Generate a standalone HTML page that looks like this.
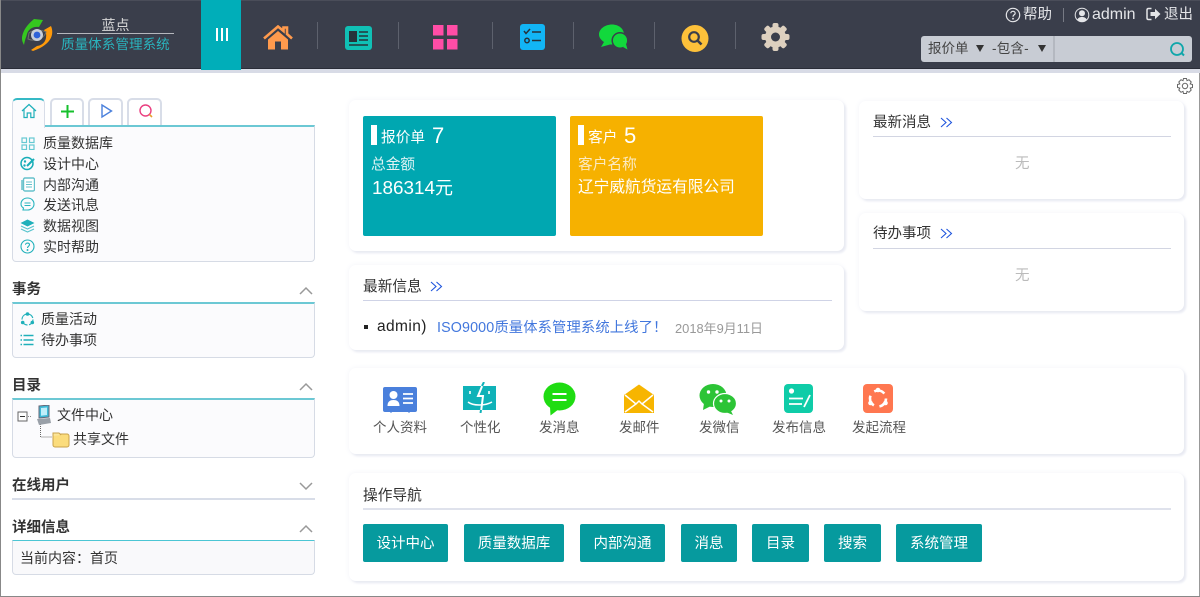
<!DOCTYPE html>
<html lang="zh-CN">
<head>
<meta charset="utf-8">
<title>质量体系管理系统</title>
<style>
*{box-sizing:border-box}
html,body{margin:0;padding:0;background:#fff}
body{width:1200px;height:597px;position:relative;overflow:hidden;font-family:"Liberation Sans","Noto Sans CJK SC",sans-serif;font-size:14px;color:#333}
.t{position:absolute;white-space:nowrap;line-height:20px;height:20px}
.a{position:absolute;display:block}
.sep{position:absolute;top:22px;width:1px;height:27px;background:#5d616d}
.card{position:absolute;background:#fff;border-radius:7px;box-shadow:2px 2px 2px #e8eaf2,0 0 6px #f2f3f8}
.line{position:absolute;height:2px;background:#dfe2ec}
.box{position:absolute;left:12px;width:303px;background:#fbfbfd;border:1px solid #d6dbe5;border-top:2px solid #6cc8d4;border-radius:0 0 4px 4px}
.h{font-weight:bold;color:#333;font-size:14.5px}
.btn{position:absolute;top:524px;height:38px;line-height:40px;background:#069a9e;color:#fff;border-radius:2px;text-align:center;font-size:14.5px}
.tab{position:absolute;top:98px;height:27px;background:#fff;border:2px solid #d8dde8;border-bottom:0;border-radius:5px 5px 0 0}
.ic{font-size:13.5px;color:#555}
</style>
</head>
<body>
<!-- header -->
<div class="a" style="left:0;top:0;width:1200px;height:69px;background:#3a3e4b;border-top:1px solid #4a4d59;border-bottom:1px solid #2a2d38"></div>
<div class="a" style="left:0;top:69px;width:1200px;height:4px;background:#d8dbe6"></div>
<div class="a" style="left:0;top:0;width:1px;height:597px;background:#888"></div>
<div class="a" style="left:1199px;top:73px;width:1px;height:524px;background:#999"></div>
<div class="a" style="left:0;top:596px;width:1200px;height:1px;background:#888"></div>

<!-- logo -->
<svg class="a" style="left:20px;top:18px" width="35" height="35" viewBox="0 0 35 35">
<path d="M2 21C2 13 8 6 14 1L23 2L19 9C12 8 8 12 7 16C6 20 5 21 4 27C3 25 2 23 2 21Z" fill="#35c81f"/>
<path d="M31 8C34 15 33 26 13 33L11 32L17 28C24 27 27 22 26 15L24 12Z" fill="#ff9a0a"/>
<path d="M9 15C13 11 22 12 26 14C24 21 15 24 8 21Z" fill="#3a3e4b" stroke="#6d6f6c" stroke-width="1"/>
<circle cx="17" cy="17" r="6" fill="#c8ced8"/><circle cx="17" cy="17" r="3.4" fill="#2f62d8"/>
</svg>
<div class="t" style="left:57px;width:117px;top:15px;text-align:center;color:#d8d8d8;font-size:14px">蓝点</div>
<div class="a" style="left:57px;top:33px;width:117px;height:1px;background:#b5b7bd"></div>
<div class="t" style="left:61px;top:35px;color:#2ab3bd;font-size:13.6px">质量体系管理系统</div>

<div class="a" style="left:201px;top:0;width:40px;height:70px;background:#00aeb9"></div>
<div class="a" style="left:216px;top:28px;width:2px;height:13px;background:#fff"></div>
<div class="a" style="left:221px;top:28px;width:2px;height:13px;background:#fff"></div>
<div class="a" style="left:226px;top:28px;width:2px;height:13px;background:#fff"></div>

<!-- home -->
<svg class="a" style="left:263px;top:25px" width="30" height="25" viewBox="0 0 30 25"><path d="M1 13.5L15 1.5L20.5 6V2.5H24V9L29 13.5" fill="none" stroke="#ff9a4d" stroke-width="2.6"/><path d="M5 14.500L15 6L25 14.500V24.500H18V16.500H12V24.500H5Z" fill="#ff9a4d"/></svg>
<div class="sep" style="left:317px"></div>
<!-- news -->
<svg class="a" style="left:345px;top:26px" width="27" height="24" viewBox="0 0 27 24"><rect width="27" height="24" rx="3" fill="#10c0b5"/><rect x="4" y="5" width="8" height="11" fill="#26323a"/><path d="M14 6H23M14 10H23M14 14H23M4 19H23" stroke="#26323a" stroke-width="1.500"/></svg>
<div class="sep" style="left:398px"></div>
<!-- grid -->
<svg class="a" style="left:433px;top:25px" width="25" height="25" viewBox="0 0 25 25" fill="#ff4da6"><rect width="10.500" height="10.500"/><rect x="14" width="10.500" height="10.500"/><rect y="14" width="10.500" height="10.500"/><rect x="14" y="14" width="10.500" height="10.500"/></svg>
<div class="sep" style="left:492px"></div>
<!-- list -->
<svg class="a" style="left:520px;top:24px" width="25" height="26" viewBox="0 0 25 26"><rect width="25" height="26" rx="3" fill="#12b5f5"/><path d="M4 7L6 9.500L10 5M12 8H21M12 16.500H21" fill="none" stroke="#26323a" stroke-width="1.500"/><circle cx="7" cy="16.500" r="2.200" fill="none" stroke="#26323a" stroke-width="1.500"/></svg>
<div class="sep" style="left:573px"></div>
<!-- chat -->
<svg class="a" style="left:599px;top:24px" width="30" height="27" viewBox="0 0 30 27"><path d="M13 0.500C20 0.500 25 5 25 10.500C25 16 20 20.500 13 20.500H11L2 23L5 18C2 16 0 13.500 0 10.500C0 5 6 0.500 13 0.500Z" fill="#12d83c"/><circle cx="21" cy="16.500" r="7.800" fill="#12d83c" stroke="#3a3e4b" stroke-width="1.500"/><path d="M24 23L28.500 25.500L27 20Z" fill="#12d83c"/></svg>
<div class="sep" style="left:654px"></div>
<!-- search -->
<svg class="a" style="left:681px;top:25px" width="28" height="27" viewBox="0 0 28 27"><circle cx="14" cy="13.500" r="13.500" fill="#fdc13a"/><circle cx="13" cy="12" r="4.800" fill="none" stroke="#3a3e4b" stroke-width="2.200"/><path d="M16.500 15.500L20.500 19.500" stroke="#3a3e4b" stroke-width="2.600"/></svg>
<div class="sep" style="left:735px"></div>
<!-- gear -->
<svg class="a" style="left:761px;top:23px" width="29" height="28" viewBox="0 0 29 28"><g fill="#ddd0bf"><circle cx="14.500" cy="14" r="10.500"/><g><rect x="11.500" y="0" width="6" height="28" rx="2"/><rect x="11.500" y="0" width="6" height="28" rx="2" transform="rotate(45 14.500 14)"/><rect x="11.500" y="0" width="6" height="28" rx="2" transform="rotate(90 14.500 14)"/><rect x="11.500" y="0" width="6" height="28" rx="2" transform="rotate(135 14.500 14)"/></g></g><circle cx="14.500" cy="14" r="4.500" fill="#3a3e4b"/></svg>

<!-- top right -->
<svg class="a" style="left:1005px;top:7px" width="16" height="16" viewBox="0 0 16 16"><circle cx="8" cy="8" r="6.700" fill="none" stroke="#e4e5e8" stroke-width="1.200"/><path d="M5.800 6.300C5.800 3.700 10.200 3.700 10.200 6.200C10.200 7.800 8 7.800 8 9.700" fill="none" stroke="#e4e5e8" stroke-width="1.200"/><circle cx="8" cy="11.700" r="0.900" fill="#e4e5e8"/></svg>
<div class="t" style="left:1023px;top:5px;color:#e4e5e8;font-size:14.500px">帮助</div>
<div class="a" style="left:1063px;top:8px;width:1px;height:14px;background:#777a84"></div>
<svg class="a" style="left:1074px;top:7px" width="16" height="16" viewBox="0 0 16 16"><circle cx="8" cy="8" r="6.800" fill="none" stroke="#e4e5e8" stroke-width="1"/><circle cx="8" cy="6.300" r="3" fill="#e4e5e8"/><path d="M3.200 13C4 10.500 6 10 8 10S12 10.500 12.800 13C10.500 15.300 5.500 15.300 3.200 13Z" fill="#e4e5e8"/></svg>
<div class="t" style="left:1092px;top:5px;color:#e4e5e8;font-size:16px">admin</div>
<svg class="a" style="left:1146px;top:7px" width="15" height="14" viewBox="0 0 15 14"><path d="M5.500 1.500H2.500C1.500 1.500 1 2 1 3V11C1 12 1.500 12.500 2.500 12.500H5.500" fill="none" stroke="#e4e5e8" stroke-width="1.500"/><path d="M4.500 5H9V1.800L14.500 7L9 12.200V9H4.500Z" fill="#e4e5e8"/></svg>
<div class="t" style="left:1164px;top:5px;color:#e4e5e8;font-size:14.500px">退出</div>

<div class="a" style="left:921px;top:36px;width:271px;height:26px;background:#c8ccd4;border-radius:3px"></div>
<div class="a" style="left:1053px;top:36px;width:2px;height:26px;background:#b4b8c0"></div>
<div class="t" style="left:928px;top:39px;color:#444;font-size:13.500px">报价单</div>
<svg class="a" style="left:976px;top:45px" width="9" height="8"><path d="M0 0H8L4 7Z" fill="#333"/></svg>
<div class="t" style="left:992px;top:39px;color:#444;font-size:13.500px;letter-spacing:.2px">-包含-</div>
<svg class="a" style="left:1038px;top:45px" width="9" height="8"><path d="M0 0H8L4 7Z" fill="#333"/></svg>
<svg class="a" style="left:1169px;top:42px" width="17" height="15" viewBox="0 0 17 15"><circle cx="8" cy="7" r="6" fill="none" stroke="#10a6aa" stroke-width="1.800"/><path d="M12.500 11L15 13.500" stroke="#10a6aa" stroke-width="2"/></svg>

<svg class="a" style="left:1176px;top:77px" width="18" height="18" viewBox="0 0 18 18" fill="none" stroke="#666" stroke-width="1"><path d="M7.500 1.500H10.500L11 3.700L13 2.700L15.200 5L14.200 6.900L16.500 7.500V10.500L14.200 11.100L15.200 13L13 15.300L11 14.300L10.500 16.500H7.500L7 14.300L5 15.300L2.800 13L3.800 11.100L1.500 10.500V7.500L3.800 6.900L2.800 5L5 2.700L7 3.700Z"/><circle cx="9" cy="9" r="2.700"/></svg>

<!-- left tabs -->
<div class="box" style="top:125px;height:137px"></div>
<div class="tab" style="left:50px;width:34px"></div>
<div class="tab" style="left:88px;width:35px"></div>
<div class="tab" style="left:127px;width:35px"></div>
<div class="tab" style="left:12px;width:33px;height:30px;border:1px solid #d8dde8;border-top:2px solid #35b9c5;border-bottom:0;background:#fbfbfd;z-index:2"></div>
<svg class="a" style="left:21px;top:103px;z-index:3" width="16" height="16" viewBox="0 0 16 16" fill="none" stroke="#1fb0ba" stroke-width="1.200"><path d="M1 8L8 1.500L15 8M3 6.500V14.500H6.200V10H9.800V14.500H13V6.500"/></svg>
<svg class="a" style="left:60px;top:104px" width="15" height="15"><path d="M7.500 1V14M1 7.500H14" stroke="#16c02c" stroke-width="2"/></svg>
<svg class="a" style="left:100px;top:103px" width="13" height="16"><path d="M2 2L11.500 8L2 14Z" fill="none" stroke="#4a80dc" stroke-width="1.400"/></svg>
<svg class="a" style="left:138px;top:103px" width="16" height="16"><circle cx="7.500" cy="7.500" r="5.500" fill="none" stroke="#ea3f80" stroke-width="1.400"/><path d="M11.500 11.500L14 14" stroke="#e8a030" stroke-width="1.600"/></svg>

<svg class="a" style="left:21px;top:137px" width="14" height="13" fill="none" stroke="#66c9d2" stroke-width="1.200"><rect x="1" y="1" width="4.500" height="4.500"/><rect x="8.500" y="1" width="4.500" height="4.500"/><rect x="1" y="8" width="4.500" height="4.500"/><rect x="8.500" y="8" width="4.500" height="4.500"/></svg>
<div class="t" style="left:43px;top:133px">质量数据库</div>
<svg class="a" style="left:20px;top:156px" width="15" height="15" viewBox="0 0 15 15"><circle cx="7" cy="7.500" r="6" fill="none" stroke="#18aeb8" stroke-width="1.500"/><circle cx="5" cy="5.500" r="1.200" fill="#18aeb8"/><circle cx="4.500" cy="9.500" r="1.200" fill="#18aeb8"/><path d="M7 10L14 3" stroke="#18aeb8" stroke-width="2"/></svg>
<div class="t" style="left:43px;top:154px">设计中心</div>
<svg class="a" style="left:21px;top:177px" width="14" height="15" viewBox="0 0 14 15"><rect x="2.500" y="1" width="11" height="13" rx="1.500" fill="#fff" stroke="#66c1cb" stroke-width="1.400"/><path d="M1 3V13" stroke="#66c1cb" stroke-width="1.500"/><path d="M5 5H11M5 7.500H11M5 10H11" stroke="#66c1cb"/></svg>
<div class="t" style="left:43px;top:175px">内部沟通</div>
<svg class="a" style="left:20px;top:197px" width="15" height="15" viewBox="0 0 15 15" fill="none" stroke="#2ab5bf" stroke-width="1.100"><path d="M7.500 1C11.500 1 14 3.800 14 7C14 10.500 11 13 7.500 13H3L3.500 11C1.800 10 1 8.500 1 7C1 3.800 3.500 1 7.500 1Z"/><path d="M4.500 6H10.500M4.500 8.500H10.500"/></svg>
<div class="t" style="left:43px;top:195px">发送讯息</div>
<svg class="a" style="left:20px;top:219px" width="15" height="14" viewBox="0 0 15 14"><path d="M7.500 0.500L14.500 4L7.500 7.500L0.500 4Z" fill="#1fb0ba"/><path d="M1 7L7.500 10L14 7M1 10L7.500 13L14 10" fill="none" stroke="#58c4cd" stroke-width="1.200"/></svg>
<div class="t" style="left:43px;top:216px">数据视图</div>
<svg class="a" style="left:20px;top:239px" width="15" height="15" viewBox="0 0 15 15" fill="none" stroke="#1fb0ba" stroke-width="1.100"><circle cx="7.500" cy="7.500" r="6.500"/><path d="M5.500 5.800C5.500 3.500 9.500 3.500 9.500 5.800C9.500 7.200 7.500 7.200 7.500 9"/><circle cx="7.500" cy="11" r="0.400"/></svg>
<div class="t" style="left:43px;top:237px">实时帮助</div>

<!-- 事务 -->
<div class="t h" style="left:12px;top:280px">事务</div>
<svg class="a" style="left:299px;top:286px" width="14" height="9"><path d="M1 8L7 2L13 8" fill="none" stroke="#999" stroke-width="1.500"/></svg>
<div class="box" style="top:302px;height:56px"></div>
<svg class="a" style="left:20px;top:312px" width="15" height="15" viewBox="0 0 15 15" fill="none" stroke="#1fb0ba" stroke-width="1.200"><circle cx="7.500" cy="7.500" r="5.500" stroke-dasharray="7 1.600"/><circle cx="7.500" cy="2" r="1.200" fill="#1fb0ba"/><circle cx="2.700" cy="10.500" r="1.200" fill="#1fb0ba"/><circle cx="12.300" cy="10.500" r="1.200" fill="#1fb0ba"/></svg>
<div class="t" style="left:41px;top:309px">质量活动</div>
<svg class="a" style="left:20px;top:334px" width="14" height="12" viewBox="0 0 14 12"><path d="M3.500 1.500H13.500M3.500 6H13.500M3.500 10.500H13.500M0.500 1.500H2M0.500 6H2M0.500 10.500H2" stroke="#1fb0ba" stroke-width="1.500"/></svg>
<div class="t" style="left:41px;top:330px">待办事项</div>

<!-- 目录 -->
<div class="t h" style="left:12px;top:376px">目录</div>
<svg class="a" style="left:299px;top:382px" width="14" height="9"><path d="M1 8L7 2L13 8" fill="none" stroke="#999" stroke-width="1.500"/></svg>
<div class="box" style="top:398px;height:60px"></div>
<svg class="a" style="left:17px;top:410px" width="70" height="48" viewBox="0 0 70 48">
<rect x="1" y="2" width="9" height="9" fill="#fff" stroke="#666"/><path d="M3 6.500H8" stroke="#333"/><path d="M11 6.500H15" stroke="#888" stroke-dasharray="1 1"/>
<path d="M23.500 12V27H35" fill="none" stroke="#666" stroke-dasharray="1 1"/>
<rect x="36" y="24" width="16" height="13" rx="2" fill="#fbdc7c" stroke="#c9a24a"/><path d="M36 26V23H42L44 25" fill="#fbe59a" stroke="#c9a24a"/>
</svg>
<svg class="a" style="left:36px;top:405px" width="16" height="20" viewBox="0 0 16 20"><path d="M3 1L13 0V12L3 13Z" fill="#3fb9d6" stroke="#667"/><path d="M5 3L11 2.500V10L5 10.700Z" fill="#bfeefa"/><path d="M1 14L14 13L15 18L3 20Z" fill="#99a0a8"/></svg>
<div class="t" style="left:57px;top:405px">文件中心</div>
<div class="t" style="left:73px;top:429px">共享文件</div>

<!-- 在线用户 -->
<div class="t h" style="left:12px;top:476px">在线用户</div>
<svg class="a" style="left:299px;top:482px" width="14" height="9"><path d="M1 1L7 7L13 1" fill="none" stroke="#999" stroke-width="1.500"/></svg>
<div class="a" style="left:12px;top:498px;width:303px;height:2px;background:#d8dde8"></div>

<!-- 详细信息 -->
<div class="t h" style="left:12px;top:518px">详细信息</div>
<svg class="a" style="left:299px;top:524px" width="14" height="9"><path d="M1 8L7 2L13 8" fill="none" stroke="#999" stroke-width="1.500"/></svg>
<div class="box" style="top:540px;height:35px;border-top:1px solid #4cc6d4;background:#f9f9fb"></div>
<div class="t" style="left:20px;top:548px">当前内容：首页</div>

<!-- cards -->
<div class="card" style="left:349px;top:100px;width:495px;height:151px"></div>
<div class="a" style="left:363px;top:116px;width:193px;height:120px;background:#00a7b1;border-radius:2px"></div>
<div class="a" style="left:570px;top:116px;width:193px;height:120px;background:#f6b100;border-radius:2px"></div>
<div class="a" style="left:371px;top:125px;width:6px;height:20px;background:#fff"></div>
<div class="t" style="left:381px;top:128px;color:#fff;font-size:14.700px">报价单</div>
<div class="t" style="left:432px;top:126px;color:#fff;font-size:22px">7</div>
<div class="t" style="left:371px;top:155px;color:#dff3f4;font-size:14.700px">总金额</div>
<div class="t" style="left:372px;top:178px;color:#fff;font-size:18px"><span style="font-size:18.900px">186314</span>元</div>
<div class="a" style="left:578px;top:125px;width:6px;height:20px;background:#fff"></div>
<div class="t" style="left:588px;top:128px;color:#fff;font-size:14.700px">客户</div>
<div class="t" style="left:624px;top:126px;color:#fff;font-size:22px">5</div>
<div class="t" style="left:578px;top:155px;color:#fbeac2;font-size:14.700px">客户名称</div>
<div class="t" style="left:578px;top:178px;color:#fff;font-size:15.700px">辽宁威航货运有限公司</div>

<div class="card" style="left:349px;top:265px;width:495px;height:85px"></div>
<div class="t" style="left:363px;top:277px;font-size:14.700px">最新信息</div>
<svg class="a" style="left:430px;top:281px" width="13" height="11" fill="none" stroke="#1f55dd" stroke-width="1.100"><path d="M1 1L6 5.500L1 10M6.500 1L11.500 5.500L6.500 10"/></svg>
<div class="line" style="left:363px;top:300px;width:469px;height:1px;background:#cfd3e6"></div>
<div class="a" style="left:364px;top:325px;width:4px;height:4px;background:#222"></div>
<div class="t" style="left:377px;top:317px;color:#222;font-size:15.500px;letter-spacing:.4px">admin)</div>
<div class="t" style="left:437px;top:318px;color:#4277dd;font-size:14.300px;letter-spacing:.13px">ISO9000质量体系管理系统上线了！</div>
<div class="t" style="left:675px;top:319px;color:#999;font-size:12.900px">2018年9月11日</div>

<div class="card" style="left:859px;top:101px;width:325px;height:98px"></div>
<div class="t" style="left:873px;top:113px;font-size:14.500px">最新消息</div>
<svg class="a" style="left:940px;top:117px" width="13" height="11" fill="none" stroke="#1f55dd" stroke-width="1.100"><path d="M1 1L6 5.500L1 10M6.500 1L11.500 5.500L6.500 10"/></svg>
<div class="line" style="left:873px;top:136px;width:298px;height:1px;background:#d2d5e2"></div>
<div class="t" style="left:1015px;top:154px;color:#bbb;font-size:14.500px">无</div>

<div class="card" style="left:859px;top:213px;width:325px;height:98px"></div>
<div class="t" style="left:873px;top:224px;font-size:14.500px">待办事项</div>
<svg class="a" style="left:940px;top:228px" width="13" height="11" fill="none" stroke="#1f55dd" stroke-width="1.100"><path d="M1 1L6 5.500L1 10M6.500 1L11.500 5.500L6.500 10"/></svg>
<div class="line" style="left:873px;top:248px;width:298px;height:1px;background:#d2d5e2"></div>
<div class="t" style="left:1015px;top:266px;color:#bbb;font-size:14.500px">无</div>

<!-- quick icons -->
<div class="card" style="left:349px;top:368px;width:835px;height:86px"></div>
<svg class="a" style="left:383px;top:387px" width="34" height="26" viewBox="0 0 34 26"><rect width="34" height="25" rx="2" fill="#4a80dc"/><circle cx="10.500" cy="8" r="4" fill="#fff"/><path d="M4.500 19C4.500 14.500 7 13 10.500 13S16.500 14.500 16.500 19Z" fill="#fff"/><path d="M20 7H30M20 11.500H30M20 16H30" stroke="#fff" stroke-width="1.800"/><path d="M8 25V26M26 25V26" stroke="#4a80dc"/></svg>
<div class="t ic" style="left:373px;top:418px">个人资料</div>
<svg class="a" style="left:463px;top:382px" width="34" height="31" viewBox="0 0 34 31"><rect y="4" width="33" height="24" fill="#0fb2b8"/><path d="M20 2L15 14H20L18 30" fill="none" stroke="#fff" stroke-width="2"/><path d="M21 0L19 4M18 28L17.500 31" stroke="#0fb2b8" stroke-width="2"/><path d="M7 9V12M26 9V12" stroke="#fff" stroke-width="1.600"/><path d="M5 20C10 24 22 24 29 20" fill="none" stroke="#fff" stroke-width="1.500"/></svg>
<div class="t ic" style="left:460px;top:418px">个性化</div>
<svg class="a" style="left:543px;top:382px" width="33" height="34" viewBox="0 0 33 34"><ellipse cx="16.500" cy="14.500" rx="16" ry="14" fill="#1fdc12"/><path d="M7 25L7.500 33.500L16 27Z" fill="#1fdc12"/><path d="M9.500 12H23.500M9.500 18H23.500" stroke="#fff" stroke-width="2"/></svg>
<div class="t ic" style="left:539px;top:418px">发消息</div>
<svg class="a" style="left:624px;top:384px" width="30" height="30" viewBox="0 0 30 30"><path d="M0 11L15 0.500L30 11V29H0Z" fill="#f7b500"/><path d="M1 11L12 20L1 28M29 11L18 20L29 28M12 20L15 17L18 20" fill="none" stroke="#fff" stroke-width="1.500"/></svg>
<div class="t ic" style="left:619px;top:418px">发邮件</div>
<svg class="a" style="left:699px;top:384px" width="38" height="31" viewBox="0 0 38 31"><ellipse cx="14" cy="11.500" rx="13.500" ry="11.500" fill="#2cc436"/><path d="M5 19L4 26L12 22Z" fill="#2cc436"/><ellipse cx="26" cy="19.500" rx="11.500" ry="10" fill="#2cc436" stroke="#fff" stroke-width="1.200"/><path d="M32 27L34 31L28 28.500Z" fill="#2cc436"/><circle cx="9.500" cy="8" r="1.700" fill="#fff"/><circle cx="18" cy="8" r="1.700" fill="#fff"/><circle cx="22" cy="17" r="1.500" fill="#fff"/><circle cx="30" cy="17" r="1.500" fill="#fff"/></svg>
<div class="t ic" style="left:699px;top:418px">发微信</div>
<svg class="a" style="left:784px;top:384px" width="29" height="29" viewBox="0 0 29 29"><rect width="29" height="29" rx="4" fill="#0fcca8"/><circle cx="7.500" cy="7" r="2.600" fill="#fff"/><path d="M5 14.500H19M5 20H18M20 23L26 11" stroke="#fff" stroke-width="1.800"/></svg>
<div class="t ic" style="left:772px;top:418px">发布信息</div>
<svg class="a" style="left:863px;top:384px" width="30" height="29" viewBox="0 0 30 29"><rect width="30" height="29" rx="4" fill="#ff7750"/><circle cx="15" cy="14.500" r="8" fill="none" stroke="#fff" stroke-width="2.600" stroke-dasharray="11 5.800"/><circle cx="15" cy="6" r="2.300" fill="#fff"/><circle cx="7.500" cy="19" r="2.300" fill="#fff"/><circle cx="22.500" cy="19" r="2.300" fill="#fff"/></svg>
<div class="t ic" style="left:852px;top:418px">发起流程</div>

<!-- 操作导航 -->
<div class="card" style="left:349px;top:473px;width:835px;height:108px"></div>
<div class="t" style="left:363px;top:486px;font-size:14.700px">操作导航</div>
<div class="line" style="left:363px;top:508px;width:808px"></div>
<div class="btn" style="left:363px;width:85px">设计中心</div>
<div class="btn" style="left:464px;width:100px">质量数据库</div>
<div class="btn" style="left:580px;width:85px">内部沟通</div>
<div class="btn" style="left:681px;width:56px">消息</div>
<div class="btn" style="left:752px;width:57px">目录</div>
<div class="btn" style="left:824px;width:57px">搜索</div>
<div class="btn" style="left:896px;width:86px">系统管理</div>
</body>
</html>
